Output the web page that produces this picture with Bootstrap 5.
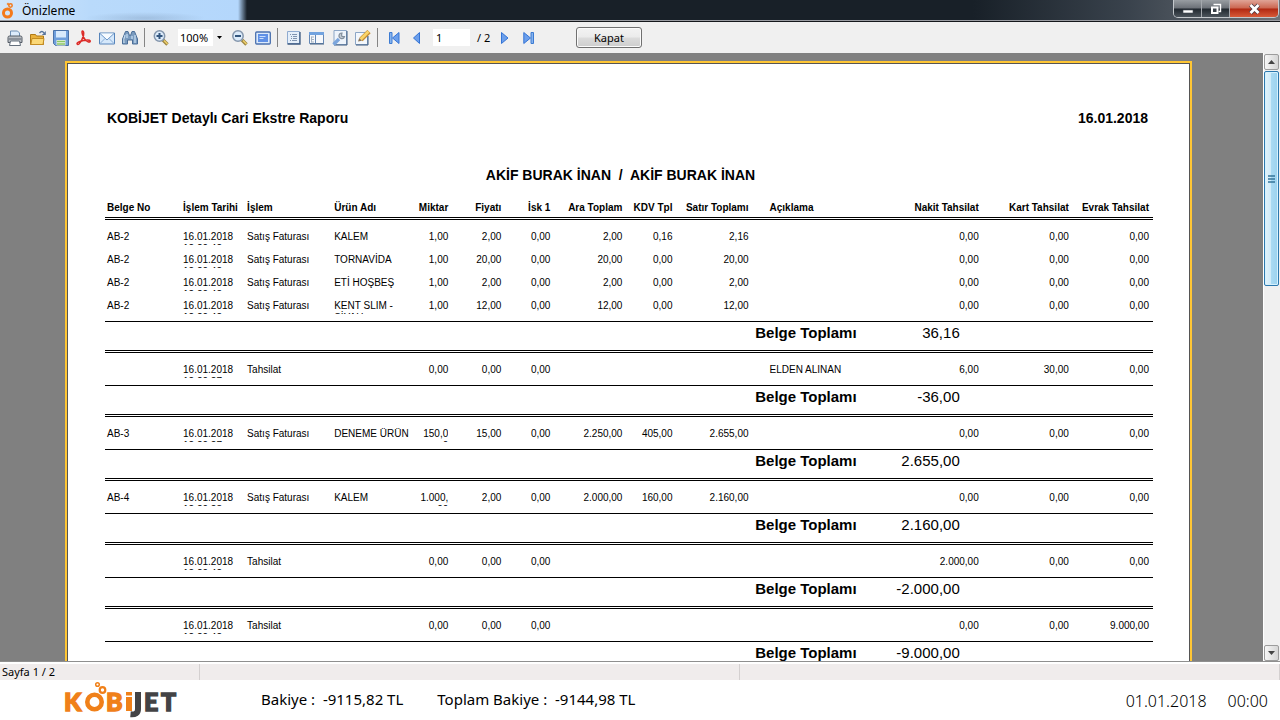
<!DOCTYPE html>
<html lang="tr">
<head>
<meta charset="utf-8">
<meta name="viewport" content="width=device-width, initial-scale=1">
<title>Önizleme</title>
<link rel="stylesheet" href="https://cdn.jsdelivr.net/npm/bootstrap@5.3.0/dist/css/bootstrap.min.css">
<style>
  body { font-family: "Noto Sans", "Open Sans", sans-serif; font-size: 12px; line-height: 16px; color: #000; background: #fff; }
  svg { display: block; }

  /* window caption */
  .caption-bar { height: 22px; border-bottom: 1px solid #15181c; box-shadow: inset 0 -1px #9a9ca2;
    background:
      radial-gradient(ellipse 60px 6px at 145px 18px, rgba(120,145,175,.35), transparent),
      linear-gradient(90deg, #d3e6fa 0, #b9dafb 90px, #b4d7fc 238px, #182028 247px, #182028 76%, #39424c 88%, #6d7278 100%); }
  .caption-text { line-height: 21px; padding-left: 6px; color: #000; }
  .win-buttons { height: 18px; margin-right: 1px; border: 1px solid #c4c8cc; border-top: 0; border-radius: 0 0 5px 5px; overflow: hidden; }
  .win-btn { border: 0; border-right: 1px solid #a4a8ad; padding: 0; width: 28px; display: flex; align-items: center; justify-content: center;
    background: linear-gradient(#989da2, #6b7077 48%, #20272e 52%, #4c545c); }
  .win-btn.close-win { width: 48px; border-right: 0; background: linear-gradient(#e0a497, #cb6650 48%, #b02812 52%, #d85a38); }

  /* toolbar */
  .tool-strip { height: 31px; background: #f0f0f0; gap: 7px; padding: 0 7px; }
  .tool-btn { border: 0; padding: 0; background: none; width: 16px; height: 16px; flex: none; }
  .rule-v { width: 1px; height: 19px; margin: 0 1px 0 -1px; background: #858585; flex: none; }
  .tool-field { border: 0; background: #fff; height: 17px; line-height: 17px; padding: 0 3px; font-size: 11px; color: #000; border-radius: 0; }
  .zoom-box { width: 47px; margin-left: 2px; }
  .zoom-box select { width: 100%; appearance: none; padding: 0 0 0 2px; }
  .zoom-arrow { position: absolute; right: 0; top: 0; width: 12px; height: 17px; background: #f0f0f0; pointer-events: none; display: flex; align-items: center; justify-content: center; }
  .pager { gap: 7px; padding-left: 2px; }
  .page-box { width: 37px; padding: 0 3px; margin-left: -1px; }
  .page-count { width: 16px; font-size: 11px; }
  .kapat-btn { width: 66px; height: 21px; margin-left: 30px; border: 1px solid #707070; border-radius: 3px; padding: 0; line-height: 17px; font-size: 11px; color: #000;
    background: linear-gradient(#f3f3f3, #ebebeb 48%, #dcdcdc 52%, #cdcdcd); box-shadow: inset 0 0 0 1px #fbfbfb; }

  /* document area */
  .work-area { background: #808080; min-height: 0; }
  .sheet { margin: 8px 71px 0 65px; border: 2px solid #ffc634; background: #fff; }
  .sheet-inner { border: 1px solid #555; padding: 46px 36px 30px 37px; min-height: 1560px; font-family: "Liberation Sans", Arial, sans-serif; }
  .report-title { font-size: 14px; line-height: 16px; font-weight: 700; margin: 0; }
  .report-head { padding: 0 5px 0 2px; }
  .client-name { padding-right: 17px; margin: 41px 0 19px; white-space: pre; }

  .ledger { width: 100%; table-layout: fixed; border-collapse: separate; border-spacing: 0; font-size: 10px; line-height: 12px; }
  .ledger th, .ledger td { padding: 9px 2px 0; white-space: nowrap; vertical-align: top; }
  .ledger th { padding: 0 2px 4px; border-bottom: 3px double #000; line-height: 11px; }
  .ledger .num { text-align: right; }
  .ledger .num:last-child { padding-right: 4px; }
  .ledger .desc { padding-left: 19px; }
  .ledger tbody tr:first-child td { padding-top: 11px; }
  .ledger .clip-box { height: 14px; overflow: hidden; }
  .ledger tbody .last-line td { padding-bottom: 7px; }
  .ledger tbody .sum-line td { font-size: 15px; line-height: 18px; border-top: 1px solid #000; border-bottom: 3px double #000; padding: 2px 2px 8px; text-align: right; }
  .ledger tbody .sum-line .sum-value { padding-right: 21px; }

  /* scrollbar */
  .scroll-track { width: 17px; padding-top: 1px; gap: 1px; background: #f0f0f0; border-left: 1px solid #fff; flex: none; }
  .scroll-btn { height: 16px; width: 15px; padding: 0; border: 1px solid #9c9c9c; border-radius: 2px; background: linear-gradient(90deg, #f6f6f6, #d6d6d6); display: flex; align-items: center; justify-content: center; }
  .scroll-thumb { height: 215px; width: 15px; border: 1px solid #2c78ae; border-radius: 2px; box-shadow: inset 0 0 0 1px #d6f1fd; background: linear-gradient(90deg, #e3f4fc 0, #d0ebf9 45%, #a9daf3 50%, #9bd2ee 100%); }

  /* status and footer */
  .status-strip { height: 19px; border-top: 1px solid #8f8f8f; box-shadow: inset 0 2px #fff; background: #f0ecec; padding-top: 2px; font-size: 11px; line-height: 15px; }
  .status-cell { border-right: 1px solid #d4d0d0; padding-left: 2px; }
  .foot { height: 40px; font-size: 15px; line-height: 20px; }
  .logo-link { margin-left: 64px; width: 116px; }
  .balance-a, .balance-b { padding-bottom: 2px; }
  .balance-a { margin-left: 81px; }
  .balance-b { margin-left: 34px; }
  .clock { font-weight: 300; font-size: 16px; padding: 2px 12px 0 0; gap: 21px; }
</style>
</head>
<body class="vh-100 d-flex flex-column overflow-hidden">

<header class="caption-bar d-flex align-items-start flex-shrink-0">
  <svg width="16" height="20" viewBox="0 0 16 20"><g fill="none" stroke="#f47a1c"><circle cx="7.500" cy="13" r="4" stroke-width="3"/><circle cx="10.500" cy="5.500" r="1.700" stroke-width="1.500"/><circle cx="8" cy="4" r=".8"/></g></svg>
  <span class="caption-text me-auto">Önizleme</span>
  <div class="win-buttons d-flex">
    <button class="win-btn" aria-label="Küçült"><svg width="12" height="12" viewBox="0 0 12 12"><path d="M1 7h10v3H1z" fill="#fff" stroke="#444b55" stroke-width=".6"/></svg></button>
    <button class="win-btn" aria-label="Geri yükle"><svg width="12" height="12" viewBox="0 0 12 12"><path d="M3.500 1.500h7v7h-2" fill="none" stroke="#fff" stroke-width="1.400"/><path d="M2 4.500h5.500v5.500H2z" fill="#384048" stroke="#fff" stroke-width="2"/></svg></button>
    <button class="win-btn close-win" aria-label="Kapat"><svg width="13" height="12" viewBox="0 0 13 12"><path d="M2.500 2l8 8M10.500 2l-8 8" stroke="#4b3a44" stroke-width="4.400"/><path d="M2.500 2l8 8M10.500 2l-8 8" stroke="#fff" stroke-width="2.800"/></svg></button>
  </div>
</header>

<nav class="tool-strip d-flex align-items-center flex-shrink-0" aria-label="Araçlar">
  <button class="tool-btn" aria-label="Yazdır"><svg width="16" height="16" viewBox="0 0 16 16"><path d="M3.500 7V1h7l2 2v4" fill="#dcebfb" stroke="#6f8fb4"/><path d="M1 7.500q0-1.500 1.500-1.500h11Q15 6 15 7.500v5H1z" fill="#b9bdc3" stroke="#555c66"/><path d="M2 9h12" stroke="#7b828b" stroke-width="1.500"/><path d="M3.500 11h9l1 4.500h-11z" fill="#fff" stroke="#65707d"/></svg></button>
  <button class="tool-btn" aria-label="Aç"><svg width="16" height="16" viewBox="0 0 16 16"><path d="M.5 14.500v-10h5l1 1.500h7v8.500z" fill="#e9b13c" stroke="#b07a17"/><path d="M.8 14.500L2 8.500h12l-1 6z" fill="#fbd877" stroke="#c48c22"/><path d="M9.500 3q2.500-3 4.500 0" fill="none" stroke="#56749c" stroke-width="1.300"/><path d="M15.800 1v4h-4z" fill="#56749c"/></svg></button>
  <button class="tool-btn" aria-label="Kaydet"><svg width="16" height="16" viewBox="0 0 16 16"><path d="M.5.5h15v15h-13l-2-2z" fill="#6f9fdc" stroke="#4a72a8"/><path d="M3 1h10v6.500H3z" fill="#d8eafc"/><path d="M3.500 10h9v5.500h-9z" fill="#eef5e8"/><path d="M4 11.500h8M4 14h8" stroke="#8cc665" stroke-width="1.600"/></svg></button>
  <button class="tool-btn" aria-label="PDF"><svg width="16" height="16" viewBox="0 0 16 16" fill="none" stroke="#dc2a27" stroke-width="1.500" stroke-linejoin="round"><path d="M6.500 1q1.700 0 1 4.500Q6 11 3 14q-1.500 1-2-.3 0-1.700 6.500-3.200 6-1 6.700.3.300 1.500-1.700 1.200Q8.500 10.500 6.500 4.500 5.500 1.500 6.500 1z"/></svg></button>
  <button class="tool-btn" aria-label="E-posta"><svg width="16" height="16" viewBox="0 0 16 16"><path d="M.5 3h15v11H.5z" fill="#d5e8fb" stroke="#5684ba"/><path d="M1 13.500l5-5M15 13.500l-5-5" stroke="#8aaed8"/><path d="M1 3.500l7 6.500 7-6.500" fill="#f6fbff" stroke="#6b97c9"/></svg></button>
  <button class="tool-btn" aria-label="Bul"><svg width="16" height="16" viewBox="0 0 16 16"><path d="M3.500 1.500h2.500l1.500 4h1l1.500-4h2.500L15.500 9v5h-5V10h-5v4h-5V9z" fill="#7b9cc0" stroke="#4a6e98"/><path d="M3 5L2 9v4M10 6v3M13 5v8M5 4v4" stroke="#c3daf0" stroke-width="1.300"/></svg></button>
  <span class="rule-v"></span>
  <button class="tool-btn" aria-label="Yakınlaştır"><svg width="16" height="16" viewBox="0 0 16 16"><path d="M10 10l4.500 4.500" stroke="#9b8542" stroke-width="3.400"/><path d="M11 10.500l3.500 3.500" stroke="#f0d06a" stroke-width="1.500"/><circle cx="6.500" cy="6" r="5.200" fill="#dcebfa" stroke="#8496ac" stroke-width="1.500"/><path d="M3.500 6h6M6.500 3v6" stroke="#33567e" stroke-width="2"/></svg></button>
  <div class="zoom-box position-relative"><select class="tool-field d-block" aria-label="Yakınlık"><option>100%</option><option>150%</option></select><span class="zoom-arrow"><svg width="5" height="3" viewBox="0 0 5 3"><path d="M0 0h5L2.500 3z"/></svg></span></div>
  <button class="tool-btn" aria-label="Uzaklaştır"><svg width="16" height="16" viewBox="0 0 16 16"><path d="M10 10l4.500 4.500" stroke="#9b8542" stroke-width="3.400"/><path d="M11 10.500l3.500 3.500" stroke="#f0d06a" stroke-width="1.500"/><circle cx="6" cy="6" r="5.200" fill="#dcebfa" stroke="#8496ac" stroke-width="1.500"/><path d="M3 6h6" stroke="#33567e" stroke-width="2"/></svg></button>
  <button class="tool-btn" aria-label="Tam ekran"><svg width="16" height="16" viewBox="0 0 16 16"><rect x=".7" y="2" width="14.600" height="12" rx="1" fill="#dceafb" stroke="#4a70ae" stroke-width="1.300"/><path d="M3 4h10v8H3z" fill="#5f90e6"/><path d="M4.500 6.500h6M4.500 8.500h4" stroke="#c9defc"/></svg></button>
  <span class="rule-v"></span>
  <button class="tool-btn" aria-label="Anahat"><svg width="16" height="16" viewBox="0 0 16 16"><path d="M1.500 1.500h12v12h-12z" fill="#e5effa" stroke="#8fabd0"/><path d="M1.500 14h12.500V2" fill="none" stroke="#3c5a80" stroke-width="1.300"/><path d="M6 4.500h5M7 6.500h4M7 8.500h4M6 10.500h5M4 4.500h1M5 6.500h1M5 8.500h1M4 10.500h1" stroke="#7f94b0"/></svg></button>
  <button class="tool-btn" aria-label="Küçük resimler"><svg width="16" height="16" viewBox="0 0 16 16"><path d="M.5 2.500h14v11H.5z" fill="#f6f8fb" stroke="#6588b5"/><path d="M0 2h15v3H0z" fill="#72a3df"/><path d="M6.500 5v9" stroke="#6588b5"/><path d="M2.500 6.500v6M2.500 7h2.500M2.500 9.500h2.500M2.500 12h2.500" stroke="#a5b2c1"/><path d="M1 14h14" stroke="#456181"/></svg></button>
  <button class="tool-btn" aria-label="Sayfa ayarları"><svg width="16" height="16" viewBox="0 0 16 16"><path d="M2 .5h12.500v14H2z" fill="#eef4fb" stroke="#8ca6c6"/><path d="M2 15h13V1" fill="none" stroke="#3c5a80"/><path d="M1.500 14.500L7 9" stroke="#7ba5dc" stroke-width="3.400"/><path d="M10 3a2.800 2.800 0 1 0 2.500 3.500L10 6.500 9.500 5z" fill="#c5ccd5" stroke="#83909e" stroke-width="1.200"/></svg></button>
  <button class="tool-btn" aria-label="Düzenle"><svg width="16" height="16" viewBox="0 0 16 16"><path d="M.5 2.500h12v12H.5z" fill="#f3f7fc" stroke="#8ca6c6"/><path d="M1 15h12V6" fill="none" stroke="#3c5a80"/><path d="M6 9.500L14 1.500" stroke="#c78d30" stroke-width="4.600"/><path d="M5.500 9.500L13.500 1.500" stroke="#f9d469" stroke-width="2.800"/><path d="M3 11.500l1.200-3.500 2.800 2.800z" fill="#8a7458"/></svg></button>
  <span class="rule-v"></span>
  <div class="pager d-flex align-items-center">
    <button class="tool-btn" aria-label="İlk sayfa"><svg width="16" height="16" viewBox="0 0 16 16"><path d="M1.500 2.500h2.500v11H1.500z" fill="#85b3ef" stroke="#3c7bd2"/><path d="M11 2.500v11L4.500 8z" fill="#6c9feb" stroke="#3474d6"/></svg></button>
    <button class="tool-btn" aria-label="Önceki sayfa"><svg width="16" height="16" viewBox="0 0 16 16"><path d="M8.500 2.500v11L2.500 8z" fill="#6c9feb" stroke="#3474d6"/></svg></button>
    <input class="tool-field page-box" type="text" value="1" aria-label="Sayfa">
    <span class="page-count">/ 2</span>
    <button class="tool-btn" aria-label="Sonraki sayfa"><svg width="16" height="16" viewBox="0 0 16 16"><path d="M1.500 2.500v11L8 8z" fill="#6c9feb" stroke="#3474d6"/></svg></button>
    <button class="tool-btn" aria-label="Son sayfa"><svg width="16" height="16" viewBox="0 0 16 16"><path d="M8 2.500h2.500v11H8z" fill="#85b3ef" stroke="#3c7bd2"/><path d="M.8 2.500v11L7.500 8z" fill="#6c9feb" stroke="#3474d6"/></svg></button>
  </div>
  <button class="kapat-btn">Kapat</button>
</nav>

<main class="work-area d-flex flex-grow-1">
  <div class="flex-grow-1 overflow-hidden">
    <article class="sheet">
      <div class="sheet-inner">
        <div class="report-head d-flex justify-content-between">
          <h1 class="report-title">KOBİJET Detaylı Cari Ekstre Raporu</h1>
          <span class="report-title">16.01.2018</span>
        </div>
        <h2 class="report-title client-name text-center">AKİF BURAK İNAN  /  AKİF BURAK İNAN</h2>
        <table class="ledger">
          <colgroup>
            <col style="width:76px"><col style="width:64px"><col style="width:87px"><col style="width:80px"><col style="width:38px"><col style="width:53px"><col style="width:49px"><col style="width:72px"><col style="width:50px"><col style="width:76px"><col style="width:108px"><col style="width:122px"><col style="width:90px"><col style="width:82px">
          </colgroup>
          <thead>
            <tr><th>Belge No</th><th>İşlem Tarihi</th><th>İşlem</th><th>Ürün Adı</th><th class="num">Miktar</th><th class="num">Fiyatı</th><th class="num">İsk 1</th><th class="num">Ara Toplam</th><th class="num">KDV Tpl</th><th class="num">Satır Toplamı</th><th class="desc">Açıklama</th><th class="num">Nakit Tahsilat</th><th class="num">Kart Tahsilat</th><th class="num">Evrak Tahsilat</th></tr>
          </thead>
          <tbody>
            <tr><td>AB-2</td><td><div class="clip-box">16.01.2018<br>12:20:42</div></td><td>Satış Faturası</td><td>KALEM</td><td class="num">1,00</td><td class="num">2,00</td><td class="num">0,00</td><td class="num">2,00</td><td class="num">0,16</td><td class="num">2,16</td><td></td><td class="num">0,00</td><td class="num">0,00</td><td class="num">0,00</td></tr>
            <tr><td>AB-2</td><td><div class="clip-box">16.01.2018<br>12:20:42</div></td><td>Satış Faturası</td><td>TORNAVİDA</td><td class="num">1,00</td><td class="num">20,00</td><td class="num">0,00</td><td class="num">20,00</td><td class="num">0,00</td><td class="num">20,00</td><td></td><td class="num">0,00</td><td class="num">0,00</td><td class="num">0,00</td></tr>
            <tr><td>AB-2</td><td><div class="clip-box">16.01.2018<br>12:20:42</div></td><td>Satış Faturası</td><td>ETİ HOŞBEŞ</td><td class="num">1,00</td><td class="num">2,00</td><td class="num">0,00</td><td class="num">2,00</td><td class="num">0,00</td><td class="num">2,00</td><td></td><td class="num">0,00</td><td class="num">0,00</td><td class="num">0,00</td></tr>
            <tr class="last-line"><td>AB-2</td><td><div class="clip-box">16.01.2018<br>12:20:42</div></td><td>Satış Faturası</td><td><div class="clip-box">KENT SLİM -<br>SİYAH</div></td><td class="num">1,00</td><td class="num">12,00</td><td class="num">0,00</td><td class="num">12,00</td><td class="num">0,00</td><td class="num">12,00</td><td></td><td class="num">0,00</td><td class="num">0,00</td><td class="num">0,00</td></tr>
            <tr class="sum-line"><td colspan="9"></td><td colspan="2"><b>Belge Toplamı</b></td><td class="sum-value">36,16</td><td colspan="2"></td></tr>
          </tbody>
          <tbody>
            <tr class="last-line"><td></td><td><div class="clip-box">16.01.2018<br>12:20:27</div></td><td>Tahsilat</td><td></td><td class="num">0,00</td><td class="num">0,00</td><td class="num">0,00</td><td></td><td></td><td></td><td class="desc">ELDEN ALINAN</td><td class="num">6,00</td><td class="num">30,00</td><td class="num">0,00</td></tr>
            <tr class="sum-line"><td colspan="9"></td><td colspan="2"><b>Belge Toplamı</b></td><td class="sum-value">-36,00</td><td colspan="2"></td></tr>
          </tbody>
          <tbody>
            <tr class="last-line"><td>AB-3</td><td><div class="clip-box">16.01.2018<br>12:20:27</div></td><td>Satış Faturası</td><td>DENEME ÜRÜN</td><td class="num"><div class="clip-box">150,0<br>0</div></td><td class="num">15,00</td><td class="num">0,00</td><td class="num">2.250,00</td><td class="num">405,00</td><td class="num">2.655,00</td><td></td><td class="num">0,00</td><td class="num">0,00</td><td class="num">0,00</td></tr>
            <tr class="sum-line"><td colspan="9"></td><td colspan="2"><b>Belge Toplamı</b></td><td class="sum-value">2.655,00</td><td colspan="2"></td></tr>
          </tbody>
          <tbody>
            <tr class="last-line"><td>AB-4</td><td><div class="clip-box">16.01.2018<br>12:20:28</div></td><td>Satış Faturası</td><td>KALEM</td><td class="num"><div class="clip-box">1.000,<br>00</div></td><td class="num">2,00</td><td class="num">0,00</td><td class="num">2.000,00</td><td class="num">160,00</td><td class="num">2.160,00</td><td></td><td class="num">0,00</td><td class="num">0,00</td><td class="num">0,00</td></tr>
            <tr class="sum-line"><td colspan="9"></td><td colspan="2"><b>Belge Toplamı</b></td><td class="sum-value">2.160,00</td><td colspan="2"></td></tr>
          </tbody>
          <tbody>
            <tr class="last-line"><td></td><td><div class="clip-box">16.01.2018<br>12:20:42</div></td><td>Tahsilat</td><td></td><td class="num">0,00</td><td class="num">0,00</td><td class="num">0,00</td><td></td><td></td><td></td><td></td><td class="num">2.000,00</td><td class="num">0,00</td><td class="num">0,00</td></tr>
            <tr class="sum-line"><td colspan="9"></td><td colspan="2"><b>Belge Toplamı</b></td><td class="sum-value">-2.000,00</td><td colspan="2"></td></tr>
          </tbody>
          <tbody>
            <tr class="last-line"><td></td><td><div class="clip-box">16.01.2018<br>12:20:42</div></td><td>Tahsilat</td><td></td><td class="num">0,00</td><td class="num">0,00</td><td class="num">0,00</td><td></td><td></td><td></td><td></td><td class="num">0,00</td><td class="num">0,00</td><td class="num">9.000,00</td></tr>
            <tr class="sum-line"><td colspan="9"></td><td colspan="2"><b>Belge Toplamı</b></td><td class="sum-value">-9.000,00</td><td colspan="2"></td></tr>
          </tbody>
        </table>
      </div>
    </article>
  </div>
  <div class="scroll-track d-flex flex-column">
    <button class="scroll-btn" aria-label="Yukarı"><svg width="7" height="4" viewBox="0 0 7 4"><path d="M3.500 0L7 4H0z" fill="#444"/></svg></button>
    <div class="scroll-thumb mb-auto d-flex align-items-center justify-content-center"><svg width="7" height="8" viewBox="0 0 7 8"><path d="M0 1h7M0 4h7M0 7h7" stroke="#35769b" stroke-width="1.500"/></svg></div>
    <button class="scroll-btn" aria-label="Aşağı"><svg width="7" height="4" viewBox="0 0 7 4"><path d="M3.500 4L7 0H0z" fill="#444"/></svg></button>
  </div>
</main>

<div class="status-strip d-flex flex-shrink-0">
  <div class="status-cell" style="width:200px">Sayfa 1 / 2</div>
  <div class="status-cell" style="width:540px"></div>
  <div class="status-cell flex-grow-1"></div>
</div>

<footer class="foot d-flex align-items-center flex-shrink-0">
  <a class="logo-link" href="#" aria-label="KOBİJET">
    <svg width="116" height="40" viewBox="0 0 116 40" font-family="Lato, sans-serif" font-weight="900" font-size="25">
      <g fill="#f08019" stroke="#f08019" stroke-width="1.400"><text x="0" y="31">K</text><text x="42" y="31">B</text></g>
      <g fill="none" stroke="#f08019"><circle cx="30.500" cy="22" r="7.200" stroke-width="4.600"/><circle cx="38.500" cy="10" r="2.800" stroke-width="2.200"/><circle cx="33.500" cy="4.500" r="1.800" stroke-width="1.500"/></g>
      <path d="M62 17h6v14h-6zM62 12h6v3.500h-6z" fill="#f08019"/>
      <path d="M74 12v17q0 6-7.500 5.300" fill="none" stroke="#434345" stroke-width="6"/>
      <g fill="#434345" stroke="#434345" stroke-width="1.400"><text x="80" y="31">E</text><text x="97" y="31">T</text></g>
    </svg>
  </a>
  <span class="balance-a">Bakiye :&nbsp; -9115,82 TL</span>
  <span class="balance-b">Toplam Bakiye :&nbsp; -9144,98 TL</span>
  <div class="clock d-flex ms-auto"><span>01.01.2018</span><span>00:00</span></div>
</footer>

<script src="https://cdn.jsdelivr.net/npm/bootstrap@5.3.0/dist/js/bootstrap.bundle.min.js"></script>
</body>
</html>
